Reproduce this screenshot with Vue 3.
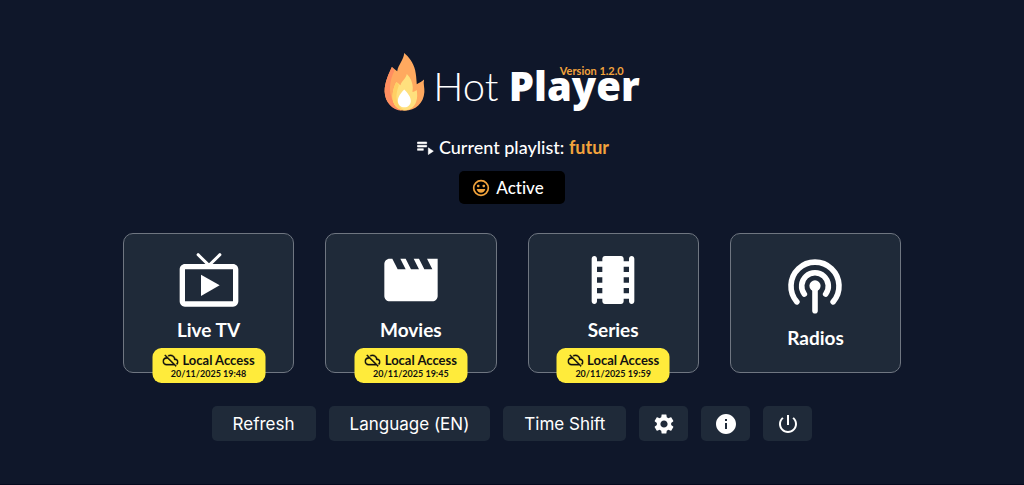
<script setup>
const cards = [
  { id: 'tv', label: 'Live TV', synced: '20/11/2025 19:48' },
  { id: 'movies', label: 'Movies', synced: '20/11/2025 19:45' },
  { id: 'series', label: 'Series', synced: '20/11/2025 19:59' },
  { id: 'radios', label: 'Radios', synced: '' },
]
const actions = ['Refresh', 'Language (EN)', 'Time Shift']
</script>

<template>
  <main class="home">
    <header class="logo">
      <svg class="flame" viewBox="12 14 120 175" aria-hidden="true">
        <path fill="#ffa95f" d="M71 14C84 24 99 43 104 65C107 79 108 92 109 108C115 105 124 101 131 94C128 107 133 119 132 132C130 166 105 188 73 188C38 188 13 164 12 130C12 102 25 75 34 56C40 61 45 65 50 69C53 49 70 35 71 14Z" />
        <path fill="#ff8e60" d="M34 56C38 60 41 65 41 69C28 96 25 121 32 146C37 168 51 182 65 188C34 186 13 162 12 130C12 102 25 75 34 56Z" />
        <path fill="#ffe07d" d="M79 77C91 88 97 104 97 119C97 124 96 128 96 132C101 132 105 129 109 126C110 139 112 149 107 162C101 178 88 187 72 187C50 187 36 170 36 147C36 129 42 111 47 102C52 104 56 108 60 111C62 99 76 92 79 77Z" />
        <path fill="#ffd064" d="M47 102C51 104 54 107 55 112C48 130 44 149 53 168C57 178 64 184 72 187C50 187 36 170 36 147C36 129 42 111 47 102Z" />
        <path fill="#ffffff" d="M71 124C81 134 91 146 91 158C91 170 83 178 72 178C60 178 52 170 52 158C52 145 62 134 71 124Z" />
      </svg>
      <h1 class="name"><span class="thin">Hot</span> <span class="heavy">Player</span></h1>
      <span class="version">Version 1.2.0</span>
    </header>

    <p class="playlist">
      <svg class="icon20" viewBox="0 0 24 24" aria-hidden="true">
        <path d="M3 10h11v2H3zm0-4h11v2H3zm0 8h7v2H3zm13-1v8l6-4z" stroke="currentColor" stroke-width=".7" />
      </svg>
      <span>Current playlist: <strong>futur</strong></span>
    </p>

    <button class="status" type="button">
      <svg class="icon20" viewBox="0 0 24 24" aria-hidden="true">
        <circle cx="12" cy="12" r="8.8" fill="none" stroke="currentColor" stroke-width="2" />
        <rect x="7.2" y="8" width="3" height="3" rx="1" />
        <rect x="13.8" y="8" width="3" height="3" rx="1" />
        <path d="M6.800 13.200h10.400c-.5 2.700-2.600 4.600-5.200 4.600s-4.700-1.900-5.200-4.600z" />
      </svg>
      Active
    </button>

    <nav class="cards">
      <button v-for="card in cards" :key="card.id" type="button" class="card" :class="{ synced: card.synced }">
        <svg v-if="card.id === 'tv'" class="art" viewBox="0 0 24 24" aria-hidden="true">
          <path fill-rule="evenodd" d="M3 6h18c1.100 0 2 .9 2 2v12c0 1.100-.9 2-2 2H3c-1.100 0-2-.9-2-2V8c0-1.100.9-2 2-2zm0 2v12h18V8z" />
          <path d="M7.900 2.500L12 6.500l4.100-4" fill="none" stroke="currentColor" stroke-width="1.1" stroke-linecap="round" />
          <path d="M9 10v8l7-4z" />
        </svg>
        <svg v-else-if="card.id === 'movies'" class="art" viewBox="0 0 24 24" aria-hidden="true">
          <path d="M18 4l2 4h-3l-2-4h-2l2 4h-3l-2-4H8l2 4H7L5 4H4c-1.100 0-2 .9-2 2v12c0 1.100.9 2 2 2h16c1.100 0 2-.9 2-2V4z" />
        </svg>
        <svg v-else-if="card.id === 'series'" class="art" viewBox="0 0 24 24" aria-hidden="true">
          <path d="M18 4v1h-2V4c0-.55-.45-1-1-1H9c-.55 0-1 .45-1 1v1H6V4c0-.55-.45-1-1-1s-1 .45-1 1v16c0 .55.45 1 1 1s1-.45 1-1v-1h2v1c0 .55.45 1 1 1h6c.55 0 1-.45 1-1v-1h2v1c0 .55.45 1 1 1s1-.45 1-1V4c0-.55-.45-1-1-1s-1 .45-1 1zM8 17H6v-2h2v2zm0-4H6v-2h2v2zm0-4H6V7h2v2zm10 8h-2v-2h2v2zm0-4h-2v-2h2v2zm0-4h-2V7h2v2z" />
        </svg>
        <svg v-else class="art" viewBox="0 0 24 24" aria-hidden="true">
          <g fill="none" stroke="currentColor" stroke-width="2.1" stroke-linecap="round">
            <path d="M5.200 17.200a9 9 0 1 1 13.600 0" />
            <path d="M8 14.300a5 5 0 1 1 8 0" />
            <path d="M12 11.500v9" />
          </g>
          <circle cx="12" cy="11.200" r="2.100" />
        </svg>
        <span class="label">{{ card.label }}</span>
        <span v-if="card.synced" class="badge">
          <span class="access">
            <svg class="cloud" viewBox="0 0 24 24" aria-hidden="true">
              <path stroke="currentColor" stroke-width=".5" d="M19.350 10.040C18.670 6.590 15.640 4 12 4c-1.480 0-2.850.43-4.010 1.170l1.460 1.460C10.210 6.230 11.080 6 12 6c3.040 0 5.500 2.460 5.500 5.500v.5H19c1.660 0 3 1.340 3 3 0 1.130-.64 2.110-1.560 2.620l1.450 1.450C23.160 18.160 24 16.680 24 15c0-2.640-2.050-4.780-4.650-4.960zM3 5.270l2.750 2.740C2.560 8.150 0 10.770 0 14c0 3.310 2.690 6 6 6h11.730l2 2L21 20.730 4.270 4 3 5.270zM7.730 10l8 8H6c-2.210 0-4-1.790-4-4s1.790-4 4-4h1.730z" />
            </svg>
            Local Access
          </span>
          <span class="date">{{ card.synced }}</span>
        </span>
      </button>
    </nav>

    <footer class="actions">
      <button v-for="action in actions" :key="action" type="button" class="action">{{ action }}</button>
      <button type="button" class="action square" aria-label="Settings">
        <svg class="icon24" viewBox="0 0 24 24" aria-hidden="true">
          <path d="M19.140 12.940c.04-.3.06-.61.06-.94 0-.32-.02-.64-.07-.94l2.030-1.580c.18-.14.23-.41.12-.61l-1.920-3.320c-.12-.22-.37-.29-.59-.22l-2.390.96c-.5-.38-1.030-.7-1.620-.94l-.36-2.540c-.04-.24-.24-.41-.48-.41h-3.840c-.24 0-.43.17-.47.41l-.36 2.540c-.59.24-1.130.57-1.620.94l-2.390-.96c-.22-.08-.47 0-.59.22L2.740 8.870c-.12.21-.08.47.12.61l2.030 1.580c-.05.3-.09.63-.09.94s.02.64.07.94l-2.030 1.580c-.18.14-.23.41-.12.61l1.920 3.320c.12.22.37.29.59.22l2.390-.96c.5.38 1.030.7 1.620.94l.36 2.540c.05.24.24.41.48.41h3.840c.24 0 .44-.17.47-.41l.36-2.540c.59-.24 1.130-.56 1.620-.94l2.390.96c.22.08.47 0 .59-.22l1.920-3.320c.12-.22.07-.47-.12-.61l-2.010-1.580zM12 15.600c-1.980 0-3.600-1.620-3.600-3.600s1.620-3.600 3.600-3.600 3.600 1.620 3.600 3.600-1.620 3.600-3.600 3.600z" />
        </svg>
      </button>
      <button type="button" class="action square" aria-label="Information">
        <svg class="icon24" viewBox="0 0 24 24" aria-hidden="true">
          <path d="M12 2C6.480 2 2 6.480 2 12s4.480 10 10 10 10-4.480 10-10S17.520 2 12 2zm1 15h-2v-6h2v6zm0-8h-2V7h2v2z" />
        </svg>
      </button>
      <button type="button" class="action square" aria-label="Power">
        <svg class="icon24" viewBox="0 0 24 24" aria-hidden="true">
          <path d="M13 3h-2v10h2V3zm4.830 2.170l-1.420 1.420C17.990 7.860 19 9.810 19 12c0 3.870-3.130 7-7 7s-7-3.130-7-7c0-2.190 1.010-4.140 2.580-5.420L6.170 5.170C4.230 6.820 3 9.260 3 12c0 4.970 4.030 9 9 9s9-4.030 9-9c0-2.740-1.230-5.180-3.170-6.830z" />
        </svg>
      </button>
    </footer>
  </main>
</template>

<style>
body {
  background: #0f172a;
}
</style>

<style scoped>
.home {
  box-sizing: border-box;
  min-height: 100vh;
  padding: 53px 12% 32px;
  display: flex;
  flex-direction: column;
  align-items: center;
  border-bottom: 1px solid #050a1e;
  background: #0f172a;
  color: #fff;
  font-family: Lato, "Liberation Sans", sans-serif;
  font-variant-ligatures: none;
}
svg {
  display: block;
  flex: none;
  fill: currentColor;
}
button {
  border: 0;
  margin: 0;
  color: inherit;
  font-family: inherit;
  font-variant-ligatures: inherit;
  cursor: pointer;
}
.logo {
  position: relative;
  display: flex;
  align-items: center;
  gap: 8px;
}
.flame {
  width: 41px;
  height: 58px;
}
.name {
  margin: 0;
  padding-top: 8px;
  font-size: 40px;
  line-height: 48px;
  font-weight: 400;
  white-space: nowrap;
}
.thin {
  font-weight: 300;
}
.heavy {
  font-family: "Open Sans", "Noto Sans", sans-serif;
  font-weight: 800;
}
.version {
  position: absolute;
  right: 16px;
  top: 12px;
  font-size: 11px;
  line-height: 12px;
  font-weight: 700;
  color: #f2a33c;
}
.icon20 {
  width: 20px;
  height: 20px;
}
.playlist {
  margin: 24px 0 0;
  display: flex;
  align-items: center;
  gap: 4px;
  font-size: 18px;
  line-height: 24px;
  font-weight: 500;
}
.playlist strong {
  font-weight: 700;
  color: #f2a33c;
}
.status {
  margin-top: 12px;
  padding: 0 21px 0 12px;
  height: 33px;
  display: flex;
  align-items: center;
  gap: 5px;
  border-radius: 5px;
  background: #000;
  font-size: 17px;
  line-height: 24px;
  font-weight: 500;
}
.status svg {
  color: #f2a33c;
}
.cards {
  align-self: stretch;
  margin-top: 29px;
  display: grid;
  grid-template-columns: repeat(4, 1fr);
  gap: 31px;
}
.card {
  position: relative;
  box-sizing: border-box;
  height: 140px;
  padding: 0;
  display: flex;
  flex-direction: column;
  align-items: center;
  justify-content: center;
  border: 1px solid #6f7681;
  border-radius: 10px;
  background: #1f2a39;
}
.synced {
  padding-bottom: 16px;
}
.art {
  width: 64px;
  height: 64px;
}
.label {
  margin-top: 6px;
  font-size: 19px;
  line-height: 24px;
  font-weight: 700;
}
.badge {
  position: absolute;
  left: 50%;
  bottom: -11px;
  transform: translateX(-50%);
  box-sizing: border-box;
  width: 113px;
  height: 35px;
  padding-top: 4px;
  border-radius: 9px;
  background: #ffeb3b;
  color: #111;
  font-weight: 700;
  white-space: nowrap;
}
.access {
  display: flex;
  align-items: center;
  justify-content: center;
  gap: 4px;
  font-size: 13px;
  line-height: 16px;
}
.cloud {
  width: 16px;
  height: 16px;
}
.date {
  display: block;
  font-size: 9px;
  line-height: 12px;
  text-align: center;
}
.actions {
  margin-top: 33px;
  display: flex;
  gap: 13px;
}
.action {
  height: 35px;
  padding: 0 21px;
  display: flex;
  align-items: center;
  justify-content: center;
  border-radius: 5px;
  background: #1f2a39;
  font-family: Inter, "Liberation Sans", sans-serif;
  font-size: 17px;
  line-height: 24px;
  white-space: nowrap;
}
.square {
  width: 49px;
  padding: 0;
}
.icon24 {
  width: 24px;
  height: 24px;
}
</style>
